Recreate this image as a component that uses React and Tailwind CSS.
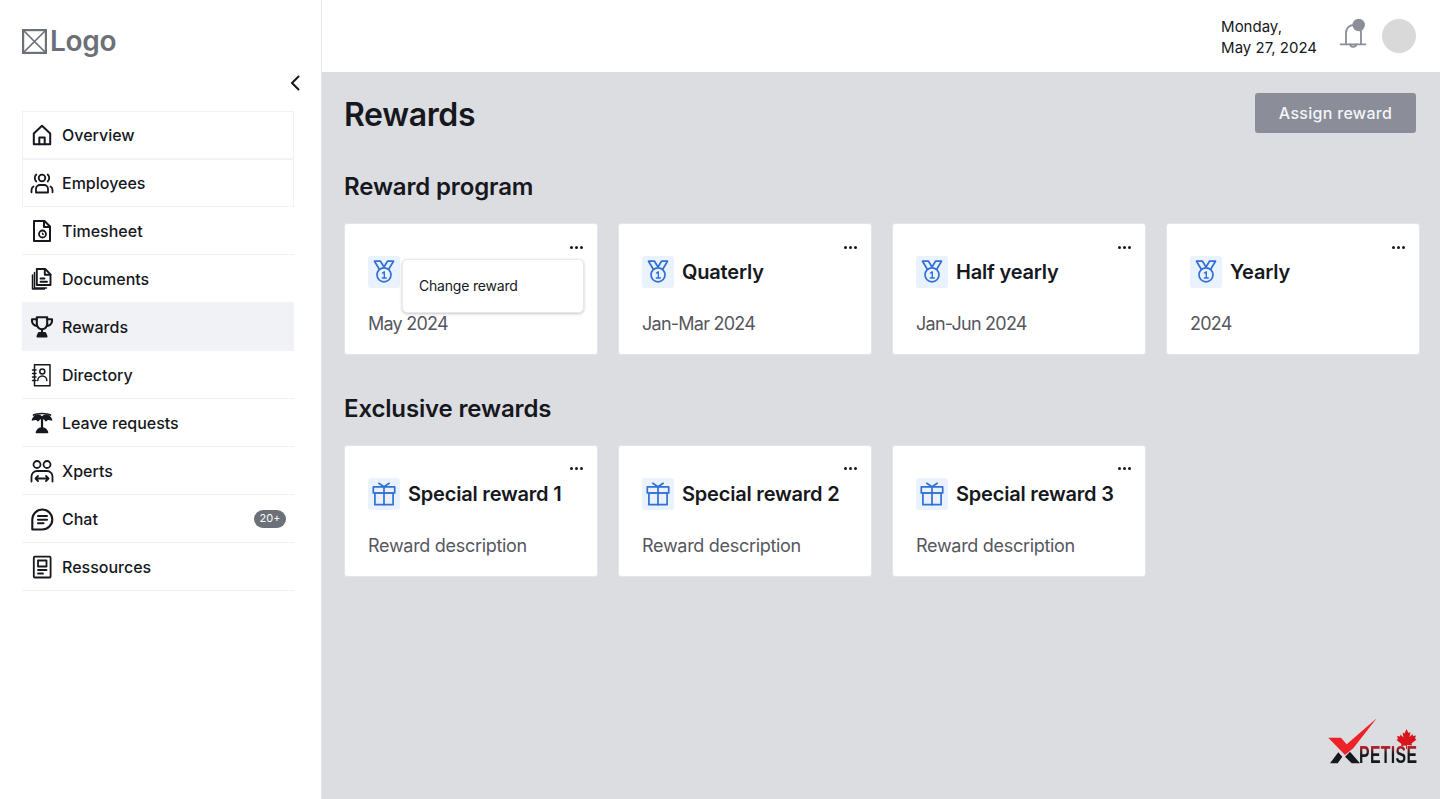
import React from "react";

const S = ({ children, sw = 1.8 }) => (
  <svg viewBox="0 0 24 24" className="h-6 w-6 shrink-0" fill="none" stroke="#16181d" strokeWidth={sw} strokeLinecap="round" strokeLinejoin="round">{children}</svg>
);

const icons = {
  home: <S sw={2}><path d="M3.800 10.500 12 2.800l8.200 7.700V21.300H3.800z" /><path d="M9.300 21.300v-6.800h5.400v6.800" /></S>,
  users: <S sw={1.800}><circle cx="12" cy="7" r="3.300" /><path d="M6 21.500v-3.500a4 4 0 0 1 4-4h4a4 4 0 0 1 4 4v3.500z" /><path d="M6.300 3.500a4.800 4.800 0 0 0 0 7M17.700 3.500a4.800 4.800 0 0 1 0 7M1.500 21.300v-2.300a4 4 0 0 1 2-3.500M22.500 21.300v-2.300a4 4 0 0 0-2-3.500" /></S>,
  sheet: <S sw={2}><path d="M4 2h10.500L20 7.500V22H4z" /><path d="M14 2v6h6" /><circle cx="12.500" cy="15" r="3.500" strokeWidth="1.800" /><path d="M12.500 14v1.200h1" strokeWidth="1.200" /></S>,
  docs: <S sw={1.900}><path d="M6.800 2h8.400l5.300 5.300V18H6.800z" /><path d="M14.800 2v5.700h5.700M10.500 11.500h4M10.500 14.800h6.500" /><path d="M4.500 5.500V21h12M2.500 8v14h12" strokeWidth="1.500" /></S>,
  trophy: <S sw={2.100}><path d="M6.800 2.300h10.400V9a5.200 5.200 0 0 1-10.400 0z" /><path d="M6.800 4.300H2V6a5 5 0 0 0 5.200 5M17.200 4.300H22V6a5 5 0 0 1-5.200 5M12 14.500V18" /><path d="M7.500 21.500 9 18h6l1.500 3.500z" fill="#16181d" /></S>,
  dir: <S sw={1.500}><path d="M4.500 1.700h15.500v21H4.500z" /><circle cx="12.300" cy="8.500" r="2.500" /><path d="M7.800 17.500a4.500 4.500 0 0 1 9 0" /><path d="M2.500 7h3.500M2.500 10.500h3.500M2.500 14h3.500M2.500 17.500h3.500" /></S>,
  palm: <S sw={1.700}><path d="M12 6.800C9.500 3 5.500 2.800 2.500 8.800c3-1.300 4.500-1 5.500.7 .8-1.500 2.200-2.300 4-2.700zM12 6.800c2.500-3.800 6.500-4 9.500 2-3-1.300-4.500-1-5.500.7-.8-1.500-2.200-2.300-4-2.700z" fill="#16181d" /><path d="M3.500 4C7 2 17 2 20.500 4" /><path d="M12 7v10" strokeWidth="2.200" /><path d="M6.500 21.300c1-3 3-4.300 5.500-4.300s4.500 1.300 5.500 4.300z" fill="#16181d" /></S>,
  xperts: <S sw={1.800}><circle cx="7" cy="5.500" r="3.500" /><circle cx="17" cy="5.500" r="3.500" /><path d="M1.500 22.500v-5a5.500 5.500 0 0 1 5.500-5.500h10a5.500 5.500 0 0 1 5.500 5.500v5" /><path d="M6 19.500h12M8 17l-2.500 2.500L8 22M16 17l2.500 2.500L16 22" /></S>,
  chat: <S sw={2.100}><path d="M2.300 22.500V12.500a10 10 0 1 1 10 10z" /><path d="M8 9h9M8 12.700h9M8 16.300h5.500" /></S>,
  res: <S sw={1.800}><rect x="3.800" y="1.700" width="16.800" height="20.800" rx="1" /><rect x="8" y="5.500" width="8.500" height="6" /><path d="M8 15h8.500M8 18.500h5" /></S>,
};

const nav = [
  ["Overview", "home", "border"],
  ["Employees", "users", "border"],
  ["Timesheet", "sheet", "line"],
  ["Documents", "docs", "line"],
  ["Rewards", "trophy", "active"],
  ["Directory", "dir", "line"],
  ["Leave requests", "palm", "line"],
  ["Xperts", "xperts", "line"],
  ["Chat", "chat", "line", "20+"],
  ["Ressources", "res", "line"],
];

const rowCls = {
  border: "border border-[#f1f2f5] pl-[7px]",
  line: "border-b border-[#f1f2f5] pl-[8px]",
  active: "bg-[#f1f2f6] pl-[8px]",
};

const Medal = () => (
  <svg viewBox="0 0 24 24" className="h-6 w-6" fill="none" stroke="#3070d8" strokeWidth="1.700" strokeLinejoin="round" strokeLinecap="round">
    <circle cx="12" cy="14.800" r="7" />
    <path d="M7.300 9.300 2.500 1.200h6L12 7l3.500-5.800h6l-4.800 8.100" />
    <path d="M10.500 13l1.800-1.200V18M10.300 18h4" strokeWidth="1.400" />
  </svg>
);

const Gift = () => (
  <svg viewBox="0 0 24 24" className="h-6 w-6" fill="none" stroke="#3070d8" strokeWidth="1.700" strokeLinejoin="round" strokeLinecap="round">
    <rect x="1.300" y="4.800" width="21.400" height="6.200" />
    <rect x="2.900" y="11" width="18.200" height="11.700" />
    <path d="M12 4.800v17.900M12 4.800 6.800 1.300M12 4.800l5.200-3.500" />
  </svg>
);

const Card = ({ icon, title, sub, menu, tight }) => (
  <div className="relative h-[132px] rounded-[3px] border border-[#e4e5e9] bg-white pl-[23px] pt-[32px]">
    <div className={`absolute right-[14px] flex gap-[2px] ${tight ? "top-[22px]" : "top-[21px]"}`}>
      {[0, 1, 2].map((i) => <span key={i} className="h-[3px] w-[3px] rounded-full bg-[#16181d]" />)}
    </div>
    <div className="flex items-center gap-[8px]">
      <div className="flex h-8 w-8 items-center justify-center rounded-[3px] bg-[#eaf2fd]">{icon}</div>
      {title && <div className="whitespace-nowrap text-[20px] font-semibold leading-8 tracking-[-0.2px] text-[#16181d]">{title}</div>}
    </div>
    <div className={`mt-[24px] text-[18px] leading-[24px] text-[#55575e] ${tight ? "tracking-[-0.75px]" : "tracking-[-0.3px]"}`}>{sub}</div>
    {menu && (
      <div className="absolute left-[57px] top-[35px] flex h-[54px] w-[182px] items-center rounded-[5px] border border-[#e8e9ec] bg-white pb-[2px] pl-4 text-[14px] tracking-[-0.2px] text-[#16181d] shadow-[0_1px_3px_rgba(0,0,0,0.22)]">{menu}</div>
    )}
  </div>
);

export default function App() {
  return (
    <div className="flex h-[799px] w-[1440px] overflow-hidden bg-white font-['Inter',sans-serif] text-[#16181d]">
      <aside className="w-[322px] shrink-0 border-r border-[#e4e5e9] bg-white pl-[22px] pr-[27px]">
        <div className="flex h-[83px] items-center gap-[3px]">
          <svg viewBox="0 0 25 25" className="h-[25px] w-[25px]" fill="none" stroke="#6b7079" strokeWidth="2.200">
            <rect x="1.100" y="1.100" width="22.800" height="22.800" />
            <path d="M1 1l23 23M24 1 1 24" strokeWidth="1.700" />
          </svg>
          <span className="-mt-[2px] text-[28px] font-semibold leading-none tracking-[-0.3px] text-[#6b7079]">Logo</span>
        </div>
        <div className="flex h-[28px] justify-end">
          <svg viewBox="0 0 24 24" className="-mr-[13px] -mt-[12px] h-6 w-6" fill="none" stroke="#16181d" strokeWidth="2" strokeLinecap="round" strokeLinejoin="round"><path d="M15.500 5.500 9 12l6.500 6.500" /></svg>
        </div>
        <nav className="flex flex-col">
          {nav.map(([label, ic, kind, badge]) => (
            <div key={label} className={`flex h-[48px] items-center gap-2 pr-[8px] ${rowCls[kind]}`}>
              {icons[ic]}
              <span className="flex-1 text-[16px] font-medium text-[#16181d]">{label}</span>
              {badge && <span className="flex h-[18px] w-[32px] items-center justify-center rounded-full bg-[#6b7079] text-[11px] text-white">{badge}</span>}
            </div>
          ))}
        </nav>
      </aside>
      <div className="flex min-w-0 flex-1 flex-col">
        <header className="flex h-[72px] shrink-0 items-center justify-end gap-[20px] bg-white pr-[24px]">
          <div className="pt-[1px] text-[15px] leading-[21px] text-[#16181d]">Monday,<br />May 27, 2024</div>
          <svg viewBox="0 0 32 32" className="h-8 w-8 overflow-visible" fill="none" stroke="#8b8e99" strokeWidth="1.800" strokeLinecap="round">
            <path d="M9 24V13c0-4.500 3-8 7.500-8S24 8.500 24 13v11" />
            <path d="M3.500 24.300h25" />
            <path d="M13.200 24.500c.5 3 5.600 3 6.100 0" />
            <circle cx="21.700" cy="5" r="6.200" fill="#8b8e99" stroke="none" />
          </svg>
          <div className="-ml-[7px] h-[34px] w-[34px] rounded-full bg-[#d9d9d9]" />
        </header>
        <main className="flex-1 bg-[#dcdde1] pl-[22px] pr-[24px]">
          <div className="flex h-[85px] items-center justify-between">
            <h1 className="text-[32px] font-semibold tracking-[-0.35px] text-[#16181d]">Rewards</h1>
            <button className="-mt-[3px] h-[40px] w-[161px] rounded-[3px] bg-[#8b8e99] text-[16px] font-medium tracking-[0.3px] text-[#f4f5f7]">Assign reward</button>
          </div>
          <h2 className="h-[66px] text-[24px] font-semibold leading-[60px] tracking-[-0.15px] text-[#16181d]">Reward program</h2>
          <div className="grid w-[1076px] grid-cols-[repeat(4,254px)] gap-[20px]">
            <Card icon={<Medal />} sub="May 2024" menu="Change reward" tight />
            <Card icon={<Medal />} title="Quaterly" sub="Jan-Mar 2024" tight />
            <Card icon={<Medal />} title="Half yearly" sub="Jan-Jun 2024" tight />
            <Card icon={<Medal />} title="Yearly" sub="2024" tight />
          </div>
          <h2 className="mt-[24px] h-[66px] text-[24px] font-semibold leading-[60px] tracking-[-0.15px] text-[#16181d]">Exclusive rewards</h2>
          <div className="grid w-[1076px] grid-cols-[repeat(4,254px)] gap-[20px]">
            <Card icon={<Gift />} title="Special reward 1" sub="Reward description" />
            <Card icon={<Gift />} title="Special reward 2" sub="Reward description" />
            <Card icon={<Gift />} title="Special reward 3" sub="Reward description" />
          </div>
          <div className="relative">
            <div className="absolute left-[984px] top-[140px] h-[48px] w-[92px]">
              <svg viewBox="0 0 92 48" className="absolute inset-0 h-full w-full">
                <path d="M0.300 20.700 H13 L18.700 27.300 L48.700 1.300 L25.300 31.300 L17 38 Z" fill="#ed2229" />
                <path d="M2 46.300 L10.300 35.300 L14.300 39.700 L9.700 46.300 Z M17 39.700 L22 34.700 L32 46.300 H23.700 Z" fill="#16181d" />
                <path d="M78.500 12l2 4 2-1-1 5 3-3 .5 2 3-.5-1 3 1.500 1-5 4 .5 2-5-.5V32h-1v-3.500l-5 .5.5-2-5-4 1.500-1-1-3 3 .5.5-2 3 3-1-5 2 1z" fill="#d9151c" />
              </svg>
              <span className="absolute left-[31px] top-[29px] origin-left scale-x-[0.66] whitespace-nowrap bg-[linear-gradient(#c8242b_0%,#16181d_45%)] bg-clip-text font-['Liberation_Sans',sans-serif] text-[24px] font-bold leading-[18px] tracking-[0.5px] text-transparent">PETISE</span>
            </div>
          </div>
        </main>
      </div>
    </div>
  );
}
